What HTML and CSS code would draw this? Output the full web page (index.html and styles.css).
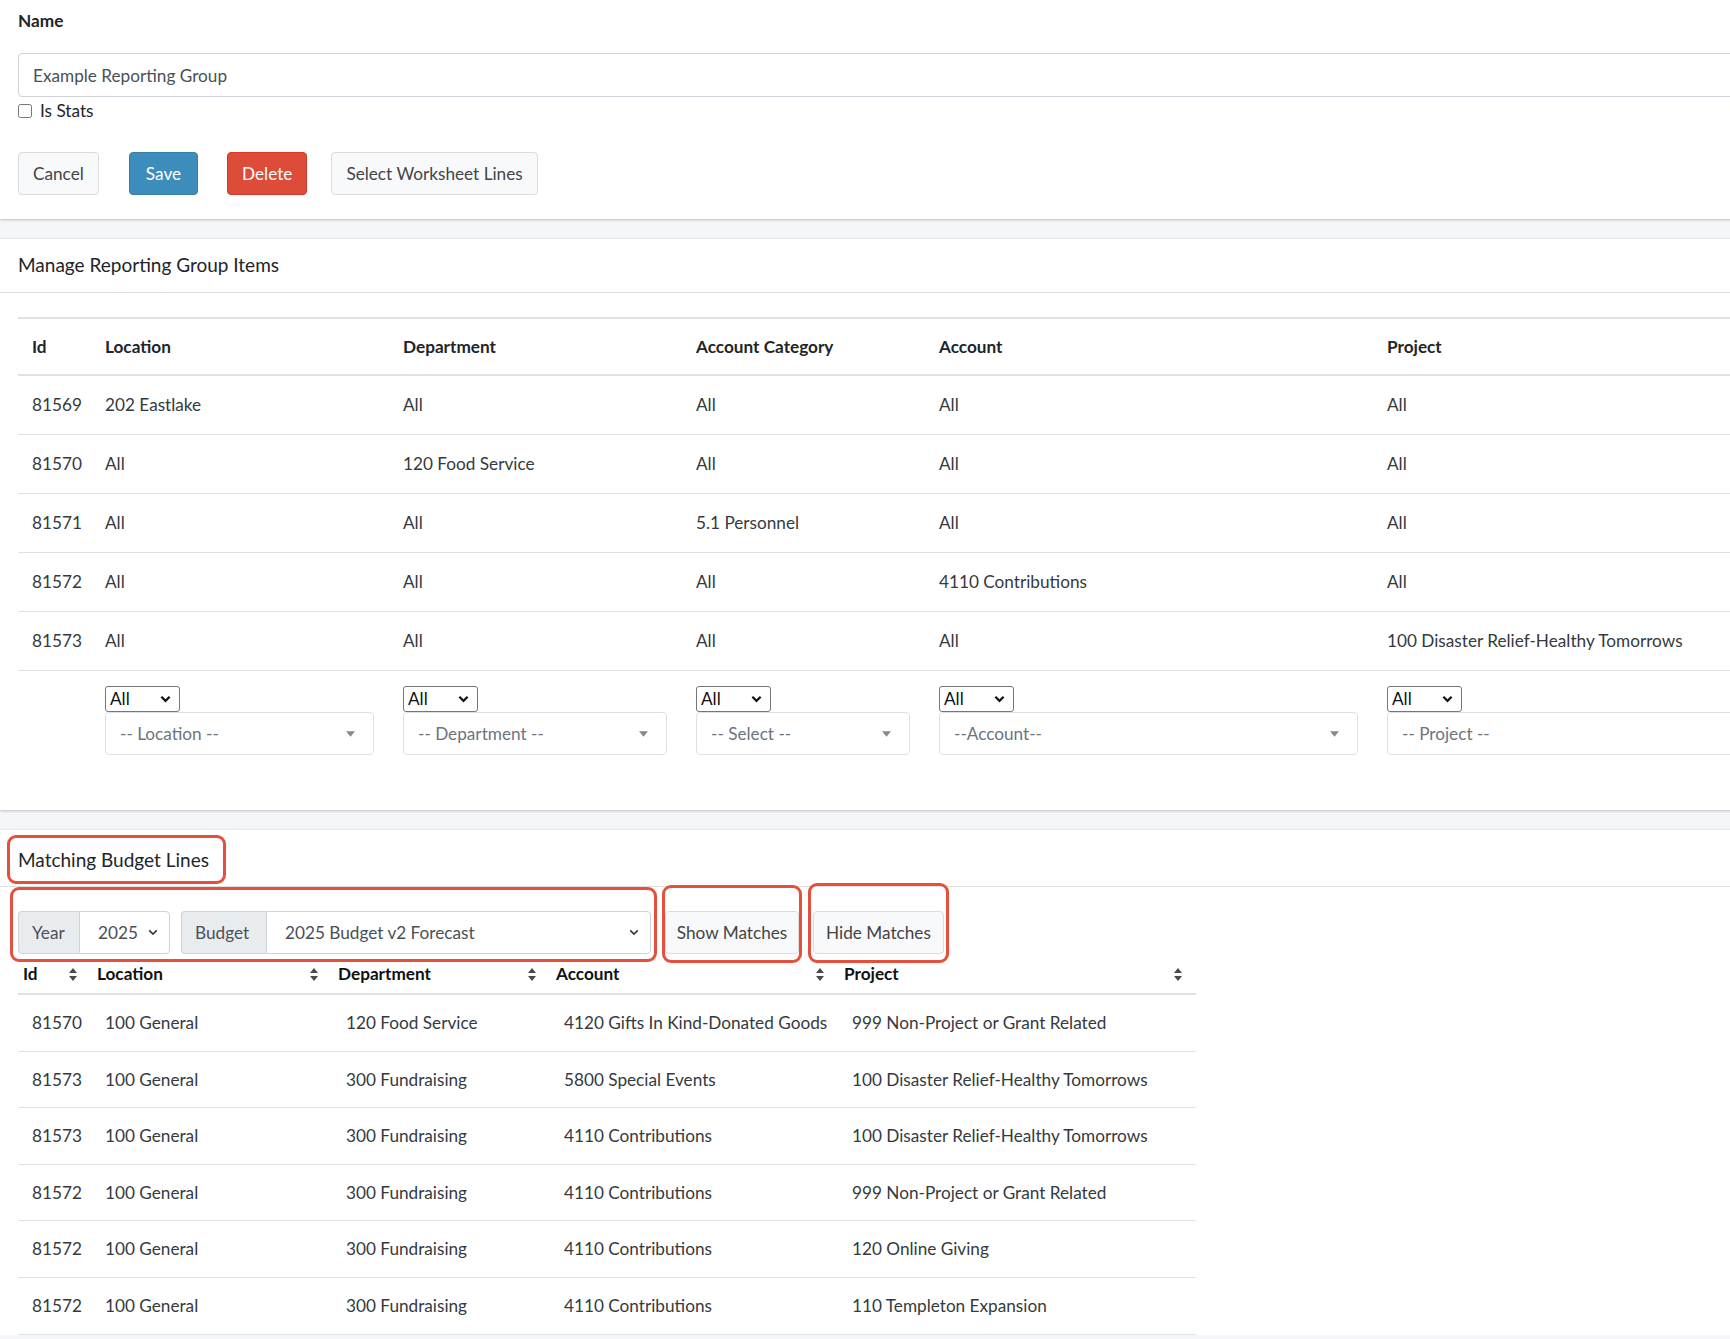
FILE: index.html
```html
<!DOCTYPE html>
<html lang="en">
<head>
<meta charset="utf-8">
<title>Reporting Group</title>
<link rel="stylesheet" href="styles.css">
</head>
<body>
<div class="page">

  <section class="card card-form">
    <label class="field-label" for="name">Name</label>
    <input id="name" class="form-control" type="text" value="Example Reporting Group">
    <label class="check"><input type="checkbox"> <span>Is Stats</span></label>
    <div class="actions">
      <button class="btn btn-default">Cancel</button>
      <button class="btn btn-primary">Save</button>
      <button class="btn btn-danger">Delete</button>
      <button class="btn btn-default btn-select">Select Worksheet Lines</button>
    </div>
  </section>

  <section class="card">
    <header class="card-header"><h3 class="card-title">Manage Reporting Group Items</h3></header>
    <div class="card-body">
      <table class="items">
        <colgroup>
          <col class="c-id"><col class="c-loc"><col class="c-dept"><col class="c-cat"><col class="c-acct"><col>
        </colgroup>
        <thead>
          <tr><th>Id</th><th>Location</th><th>Department</th><th>Account Category</th><th>Account</th><th>Project</th></tr>
        </thead>
        <tbody>
          <tr><td>81569</td><td>202 Eastlake</td><td>All</td><td>All</td><td>All</td><td>All</td></tr>
          <tr><td>81570</td><td>All</td><td>120 Food Service</td><td>All</td><td>All</td><td>All</td></tr>
          <tr><td>81571</td><td>All</td><td>All</td><td>5.1 Personnel</td><td>All</td><td>All</td></tr>
          <tr><td>81572</td><td>All</td><td>All</td><td>All</td><td>4110 Contributions</td><td>All</td></tr>
          <tr><td>81573</td><td>All</td><td>All</td><td>All</td><td>All</td><td>100 Disaster Relief-Healthy Tomorrows</td></tr>
          <tr class="filter-row">
            <td></td>
            <td>
              <div class="mini-select">All<svg class="chev" viewBox="0 0 12 8" width="11" height="8"><path d="M1.5 1.5 6 6l4.5-4.5" fill="none" stroke="#111" stroke-width="2.4"/></svg></div>
              <div class="select2">-- Location --<svg class="tri" viewBox="0 0 8 5" width="9" height="6"><path d="M0 0h8L4 5z" fill="#888"/></svg></div>
            </td>
            <td>
              <div class="mini-select">All<svg class="chev" viewBox="0 0 12 8" width="11" height="8"><path d="M1.5 1.5 6 6l4.5-4.5" fill="none" stroke="#111" stroke-width="2.4"/></svg></div>
              <div class="select2">-- Department --<svg class="tri" viewBox="0 0 8 5" width="9" height="6"><path d="M0 0h8L4 5z" fill="#888"/></svg></div>
            </td>
            <td>
              <div class="mini-select">All<svg class="chev" viewBox="0 0 12 8" width="11" height="8"><path d="M1.5 1.5 6 6l4.5-4.5" fill="none" stroke="#111" stroke-width="2.4"/></svg></div>
              <div class="select2">-- Select --<svg class="tri" viewBox="0 0 8 5" width="9" height="6"><path d="M0 0h8L4 5z" fill="#888"/></svg></div>
            </td>
            <td>
              <div class="mini-select">All<svg class="chev" viewBox="0 0 12 8" width="11" height="8"><path d="M1.5 1.5 6 6l4.5-4.5" fill="none" stroke="#111" stroke-width="2.4"/></svg></div>
              <div class="select2">--Account--<svg class="tri" viewBox="0 0 8 5" width="9" height="6"><path d="M0 0h8L4 5z" fill="#888"/></svg></div>
            </td>
            <td>
              <div class="mini-select">All<svg class="chev" viewBox="0 0 12 8" width="11" height="8"><path d="M1.5 1.5 6 6l4.5-4.5" fill="none" stroke="#111" stroke-width="2.4"/></svg></div>
              <div class="select2">-- Project --<svg class="tri" viewBox="0 0 8 5" width="9" height="6"><path d="M0 0h8L4 5z" fill="#888"/></svg></div>
            </td>
          </tr>
        </tbody>
      </table>
    </div>
  </section>

  <section class="card">
    <header class="card-header card-header-tall"><h3 class="card-title">Matching Budget Lines</h3></header>
    <div class="card-body card-body-matches">
      <div class="toolbar">
        <div class="input-group ig-year">
          <span class="addon">Year</span>
          <div class="ig-select">2025<svg class="chev-sm" viewBox="0 0 12 8" width="10" height="7"><path d="M1.5 1.5 6 6l4.5-4.5" fill="none" stroke="#343a40" stroke-width="2"/></svg></div>
        </div>
        <div class="input-group ig-budget">
          <span class="addon">Budget</span>
          <div class="ig-select">2025 Budget v2 Forecast<svg class="chev-sm" viewBox="0 0 12 8" width="10" height="7"><path d="M1.5 1.5 6 6l4.5-4.5" fill="none" stroke="#343a40" stroke-width="2"/></svg></div>
        </div>
        <button class="btn btn-default btn-show">Show Matches</button>
        <button class="btn btn-default btn-hide">Hide Matches</button>
      </div>
      <table class="matches">
        <colgroup>
          <col class="m-id"><col class="m-loc"><col class="m-dept"><col class="m-acct"><col class="m-proj">
        </colgroup>
        <thead>
          <tr>
            <th><span class="th-in">Id<svg class="sort" viewBox="0 0 8 13" width="8" height="13"><path d="M4 0 8 5H0z M0 8h8l-4 5z" fill="#4a4a4a"/></svg></span></th>
            <th><span class="th-in">Location<svg class="sort" viewBox="0 0 8 13" width="8" height="13"><path d="M4 0 8 5H0z M0 8h8l-4 5z" fill="#4a4a4a"/></svg></span></th>
            <th><span class="th-in">Department<svg class="sort" viewBox="0 0 8 13" width="8" height="13"><path d="M4 0 8 5H0z M0 8h8l-4 5z" fill="#4a4a4a"/></svg></span></th>
            <th><span class="th-in">Account<svg class="sort" viewBox="0 0 8 13" width="8" height="13"><path d="M4 0 8 5H0z M0 8h8l-4 5z" fill="#4a4a4a"/></svg></span></th>
            <th><span class="th-in">Project<svg class="sort" viewBox="0 0 8 13" width="8" height="13"><path d="M4 0 8 5H0z M0 8h8l-4 5z" fill="#4a4a4a"/></svg></span></th>
          </tr>
        </thead>
        <tbody>
          <tr><td>81570</td><td>100 General</td><td>120 Food Service</td><td>4120 Gifts In Kind-Donated Goods</td><td>999 Non-Project or Grant Related</td></tr>
          <tr><td>81573</td><td>100 General</td><td>300 Fundraising</td><td>5800 Special Events</td><td>100 Disaster Relief-Healthy Tomorrows</td></tr>
          <tr><td>81573</td><td>100 General</td><td>300 Fundraising</td><td>4110 Contributions</td><td>100 Disaster Relief-Healthy Tomorrows</td></tr>
          <tr><td>81572</td><td>100 General</td><td>300 Fundraising</td><td>4110 Contributions</td><td>999 Non-Project or Grant Related</td></tr>
          <tr><td>81572</td><td>100 General</td><td>300 Fundraising</td><td>4110 Contributions</td><td>120 Online Giving</td></tr>
          <tr><td>81572</td><td>100 General</td><td>300 Fundraising</td><td>4110 Contributions</td><td>110 Templeton Expansion</td></tr>
        </tbody>
      </table>
    </div>
  </section>

  <div class="annot annot-title"></div>
  <div class="annot annot-filters"></div>
  <div class="annot annot-show"></div>
  <div class="annot annot-hide"></div>
</div>
</body>
</html>
```

FILE: styles.css
```css
html, body {
  margin: 0;
  padding: 0;
  overflow: hidden;
  background: #f4f6f9;
}

body {
  font-family: Lato, "Source Sans Pro", "Noto Sans", sans-serif;
  font-size: 17.2px;
  line-height: 1.5;
  color: #212529;
}

.page {
  position: relative;
  width: 1900px;
}

.card {
  background: #fff;
  box-shadow: 0 0 1px rgba(0, 0, 0, 0.14), 0 1px 3px rgba(0, 0, 0, 0.2);
}

.card + .card {
  margin-top: 20px;
}

/* ---------- form card ---------- */
.card-form {
  padding: 8px 18px 24px;
}

.field-label {
  display: block;
  font-weight: 700;
  line-height: 26px;
  margin-bottom: 19px;
}

.form-control {
  display: block;
  box-sizing: border-box;
  width: 100%;
  height: 44px;
  padding: 0 14px;
  border: 1px solid #ced4da;
  border-radius: 4px;
  font: inherit;
  color: #495057;
  background: #fff;
}

.check {
  display: flex;
  align-items: center;
  height: 28px;
  gap: 8px;
  color: #212529;
}

.check input {
  margin: 0;
  width: 14px;
  height: 14px;
}

.actions {
  display: flex;
  gap: 30px;
  margin-top: 27px;
}

.btn {
  box-sizing: border-box;
  height: 43px;
  padding: 0 14px;
  border: 1px solid #ddd;
  border-radius: 4px;
  font: inherit;
  line-height: 1;
  white-space: nowrap;
  cursor: pointer;
}

.btn-default {
  background: #f8f9fa;
  border-color: #dcdcdc;
  color: #444;
}

.btn-primary {
  background: #3c8dbc;
  border-color: #367fa9;
  color: #fff;
  padding: 0 16px;
}

.btn-danger {
  background: #dd4b39;
  border-color: #d73925;
  color: #fff;
  padding: 0 14px;
  margin-left: -1px;
}

.btn-select {
  margin-left: -6px;
}

/* ---------- card header ---------- */
.card-header {
  height: 53px;
  border-bottom: 1px solid rgba(0, 0, 0, 0.125);
  display: flex;
  align-items: center;
  padding: 0 18px;
}

.card-header-tall {
  box-sizing: border-box;
  height: 57px;
  padding-top: 5px;
}

.card-title {
  margin: 0;
  font-size: 19px;
  font-weight: 400;
  line-height: 1.2;
  color: #212529;
}

.card-body {
  padding: 24px 18px 24px;
}

/* ---------- items table ---------- */
table {
  border-collapse: collapse;
  table-layout: fixed;
}

.items {
  width: 100%;
  border-top: 2px solid #dee2e6;
}

.c-id { width: 75px; }
.c-loc { width: 298px; }
.c-dept { width: 293px; }
.c-cat { width: 243px; }
.c-acct { width: 448px; }

.items th {
  text-align: left;
  font-weight: 700;
  line-height: 26px;
  padding: 15px 12px 14px;
  border-bottom: 2px solid #dee2e6;
}

.items td {
  padding: 16px 12px;
  line-height: 26px;
  border-bottom: 1px solid #dee2e6;
  color: #343a40;
  white-space: nowrap;
}

.items th:first-child,
.items td:first-child {
  padding-left: 14px;
}

.items .filter-row td {
  border-bottom: none;
  vertical-align: top;
  padding: 15px 17px 31px 12px;
}

.mini-select {
  box-sizing: border-box;
  width: 75px;
  height: 26px;
  border: 1px solid #767676;
  border-radius: 3px;
  padding: 0 8px 0 4px;
  display: flex;
  align-items: center;
  justify-content: space-between;
  color: #111;
  line-height: 1;
  background: #fff;
}

.select2 {
  box-sizing: border-box;
  margin-top: 0;
  height: 43px;
  border: 1px solid #dde1e5;
  border-radius: 4px;
  padding: 0 18px 0 14px;
  display: flex;
  align-items: center;
  justify-content: space-between;
  color: #6c757d;
  line-height: 1;
}

.tri {
  flex: none;
}

/* ---------- matches ---------- */
.card-body-matches {
  padding-bottom: 0;
}

.toolbar {
  display: flex;
  align-items: center;
}

.input-group {
  display: flex;
  height: 43px;
}

.addon {
  box-sizing: border-box;
  display: flex;
  align-items: center;
  padding: 0 13px;
  background: #e9ecef;
  border: 1px solid #ced4da;
  border-right: none;
  border-radius: 4px 0 0 4px;
  color: #495057;
}

.ig-select {
  box-sizing: border-box;
  display: flex;
  align-items: center;
  justify-content: space-between;
  padding: 0 11px 0 18px;
  border: 1px solid #ced4da;
  border-radius: 0 4px 4px 0;
  color: #495057;
  background: #fff;
}

.ig-year .addon { width: 61px; }
.ig-year .ig-select { width: 91px; }
.ig-budget .addon { width: 85px; }
.ig-budget .ig-select { width: 385px; }

.ig-year { margin-right: 11px; }
.ig-budget { margin-right: 14px; }

.btn-show {
  width: 134px;
  padding: 0 6px;
  margin-right: 14px;
}

.btn-hide {
  width: 131px;
  padding: 0 6px;
}

.matches {
  width: 1178px;
  margin-top: 4px;
}

.m-id { width: 73px; }
.m-loc { width: 241px; }
.m-dept { width: 218px; }
.m-acct { width: 288px; }
.m-proj { width: 358px; }

.matches th {
  text-align: left;
  font-weight: 700;
  line-height: 26px;
  padding: 3px 14px 6px 6px;
  border-bottom: 2px solid #dee2e6;
  color: #111;
}

.matches th:first-child {
  padding-left: 5px;
}

.th-in {
  display: flex;
  align-items: center;
  justify-content: space-between;
}

.sort {
  flex: none;
}

.matches td {
  padding: 15px 14px;
  line-height: 25.6px;
  border-bottom: 1px solid #dee2e6;
  color: #343a40;
  white-space: nowrap;
}

/* ---------- annotations ---------- */
.annot {
  position: absolute;
  box-sizing: border-box;
  border: 3px solid #e4503b;
  border-radius: 9px;
  pointer-events: none;
}

.annot-title { left: 7px; top: 835px; width: 219px; height: 49px; }
.annot-filters { left: 10px; top: 887px; width: 647px; height: 75px; }
.annot-show { left: 662px; top: 885px; width: 140px; height: 78px; }
.annot-hide { left: 808px; top: 883px; width: 141px; height: 80px; }
```
